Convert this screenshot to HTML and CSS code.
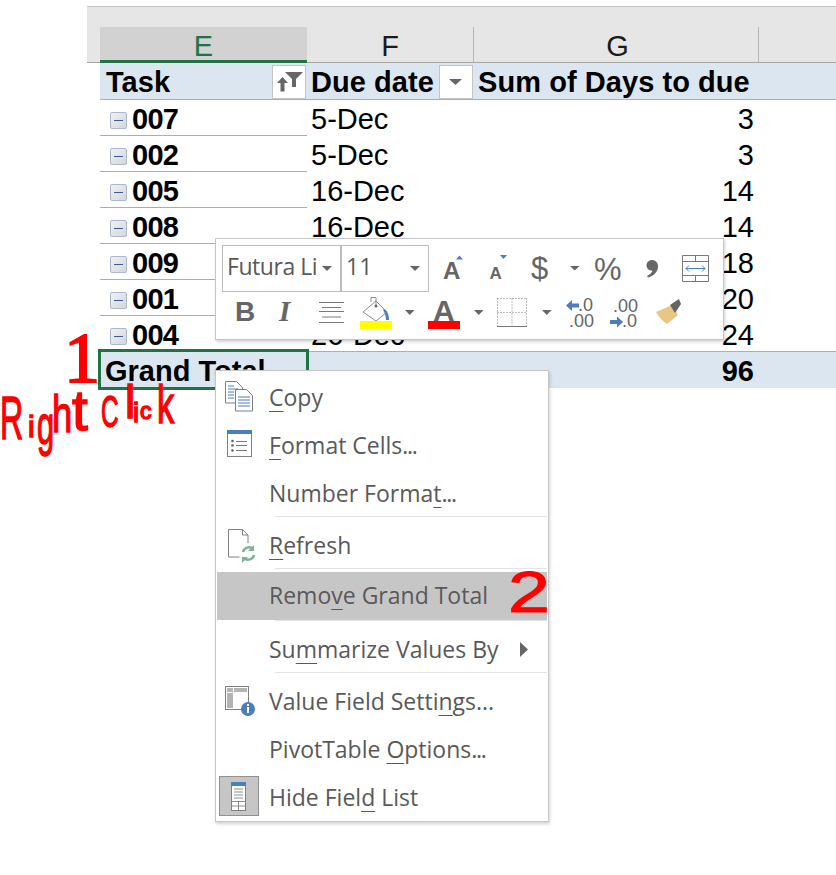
FILE: index.html
```html
<!DOCTYPE html>
<html lang="en">
<head>
<meta charset="utf-8">
<title>Remove Grand Total</title>
<link rel="stylesheet" href="styles.css">
</head>
<body>
<div class="page">
  <div class="colbar">
    <div class="colhead col-e selected">E</div>
    <div class="colhead head-f">F</div>
    <div class="colhead head-g">G</div>
  </div>
  <div class="row head">
    <div class="cell col-e bold pad-head">Task
      <span class="filter"><svg width="32" height="32" viewBox="0 0 32 32"><path class="ic" d="M12 6h18l-7 7v8h-4v-8z"/><path class="ic" d="M9.500 11l5.500 6h-3.500v8.500h-4V17H4z"/></svg></span>
    </div>
    <div class="cell col-f bold pad-f">Due date
      <span class="filter"><svg width="32" height="32" viewBox="0 0 32 32"><path class="ic" d="M9 13h13l-6.500 6z"/></svg></span>
    </div>
    <div class="cell col-g bold pad-g">Sum of Days to due</div>
  </div>
  <div class="row"><div class="cell col-e bold task"><span class="minus"></span>007</div><div class="cell col-f pad-f">5-Dec</div><div class="cell col-g num">3</div></div>
  <div class="row"><div class="cell col-e bold task"><span class="minus"></span>002</div><div class="cell col-f pad-f">5-Dec</div><div class="cell col-g num">3</div></div>
  <div class="row"><div class="cell col-e bold task"><span class="minus"></span>005</div><div class="cell col-f pad-f">16-Dec</div><div class="cell col-g num">14</div></div>
  <div class="row"><div class="cell col-e bold task"><span class="minus"></span>008</div><div class="cell col-f pad-f">16-Dec</div><div class="cell col-g num">14</div></div>
  <div class="row"><div class="cell col-e bold task"><span class="minus"></span>009</div><div class="cell col-f pad-f">18-Dec</div><div class="cell col-g num">18</div></div>
  <div class="row"><div class="cell col-e bold task"><span class="minus"></span>001</div><div class="cell col-f pad-f">20-Dec</div><div class="cell col-g num">20</div></div>
  <div class="row"><div class="cell col-e bold task"><span class="minus"></span>004</div><div class="cell col-f pad-f">26-Dec</div><div class="cell col-g num">24</div></div>
  <div class="row grand">
    <div class="cell col-e bold pad-grand picked">Grand Total</div>
    <div class="cell col-f"></div>
    <div class="cell col-g num bold">96</div>
  </div>
</div>

<div class="minibar">
  <div class="tools tools-top">
    <div class="combo combo-font"><span class="combo-text">Futura Light</span><svg class="combo-caret" width="10" height="5" viewBox="0 0 10 5"><path class="ic" d="M0 0h10L5 5z"/></svg></div>
    <div class="combo combo-size"><span class="combo-text">11</span><svg class="combo-caret" width="10" height="5" viewBox="0 0 10 5"><path class="ic" d="M0 0h10L5 5z"/></svg></div>
    <svg width="46" height="47" viewBox="0 0 46 47"><text class="glyph g-a-lg" x="13" y="34">A</text><path class="blue" d="M26 14.500l3.500-4 3.500 4z"/></svg>
    <svg width="40" height="47" viewBox="0 0 40 47"><text class="glyph g-a-sm" x="13.500" y="34">A</text><path class="blue" d="M24 10h7l-3.500 4z"/></svg>
    <svg width="50" height="47" viewBox="0 0 50 47"><text class="glyph g-dollar" x="15" y="34">$</text></svg>
    <svg width="20" height="47" viewBox="0 0 20 47"><path class="ic" d="M4 21h9.500l-4.750 4.500z"/></svg>
    <svg width="45" height="47" viewBox="0 0 45 47"><text class="glyph g-pct" x="8" y="35">%</text></svg>
    <svg width="40" height="47" viewBox="0 0 40 47"><path class="ic" d="M21 15c4 0 6 3 6 6.500 0 5-4 9.500-10 11l-1-1.500c3-1.500 5-3.500 5.500-5.500-3.500.5-6-2-6-5.200 0-3 2.500-5.300 5.500-5.300z"/></svg>
    <svg width="50" height="47" viewBox="0 0 50 47"><path class="line" d="M11.500 10.500h26v26h-26zM11.500 16.500h26M11.500 30.500h26M24.500 10.500v6M24.500 30.500v6"/><path class="blue-line" d="M15 23.500h19M18 20.500l-3 3 3 3M31 20.500l3 3-3 3"/></svg>
  </div>
  <div class="tools">
    <svg width="45" height="47" viewBox="0 0 45 47"><text class="glyph g-b" x="13" y="29">B</text></svg>
    <svg width="45" height="47" viewBox="0 0 45 47"><text class="glyph g-i" x="12" y="29">I</text></svg>
    <svg width="40" height="47" viewBox="0 0 40 47"><path class="line" d="M7 10.500h25M10 15.500h19M7 19.500h25M10 25h19M7 30.500h25"/></svg>
    <svg width="48" height="47" viewBox="0 0 48 47"><path class="line-thin" d="M11 20L24 9l11 11-11 9z"/><path class="line-thin" d="M19 10V5.500h5V13"/><circle class="ic" cx="24" cy="14" r="1.500"/><path class="blue" d="M32 17c3.500 2 5 6 5 11h-3c0-3-.5-6-3-10z"/><rect class="yellow" x="8" y="29" width="32" height="8"/></svg>
    <svg width="20" height="47" viewBox="0 0 20 47"><path class="ic" d="M5 18h9.500l-4.750 5z"/></svg>
    <svg width="48" height="47" viewBox="0 0 48 47"><text class="glyph g-a-red" x="13" y="29">A</text><rect class="red" x="8" y="29" width="32" height="8"/></svg>
    <svg width="20" height="47" viewBox="0 0 20 47"><path class="ic" d="M6 18h9.500l-4.750 5z"/></svg>
    <svg width="48" height="47" viewBox="0 0 48 47"><path class="dots" d="M9.500 6.500h29M9.500 20.500h29M24 6.500v28M9.500 6.500v28M38.500 6.500v28"/><path class="line" d="M9 34.500h30"/></svg>
    <svg width="20" height="47" viewBox="0 0 20 47"><path class="ic" d="M6 18h9.500l-4.750 5z"/></svg>
    <svg width="48" height="47" viewBox="0 0 48 47"><path class="blue" d="M10 13.500l6-5.500v3.500h7v4h-7V19z"/><text class="glyph g-dec" x="22" y="19">.0</text><text class="glyph g-dec" x="13" y="35">.00</text></svg>
    <svg width="46" height="47" viewBox="0 0 46 47"><text class="glyph g-dec" x="9" y="20">.00</text><path class="blue" d="M19 30l-6 5.500V32H6v-4h7v-3.500z"/><text class="glyph g-dec" x="18" y="35">.0</text></svg>
    <svg width="40" height="47" viewBox="0 0 40 47"><path class="tan" d="M6 20l16-7 6 10-11 9c-5-3-8-7-11-12z"/><path class="ic" d="M20 13l9-6 2 5-6 9z"/></svg>
  </div>
</div>

<div class="menu">
  <div class="item">
    <svg class="slot" width="53" height="48" viewBox="0 0 53 48"><path class="page-line" d="M9.500 7.500h11l6 6v15.500h-17z"/><path class="page-fill" d="M19.500 15.500h11l6 6v15.500h-17z"/><path class="blue-line" d="M12 12h6M12 15h10M12 18h6M12 21h6M12 24h6M22 23h12M22 26h12M22 29h12M22 32h12"/></svg>
    <span class="label"><u>C</u>opy</span>
  </div>
  <div class="item">
    <svg class="slot" width="53" height="48" viewBox="0 0 53 48"><rect class="page-line" x="11.500" y="8.500" width="24" height="26"/><rect class="blue" x="11" y="8" width="25" height="4"/><circle class="ic" cx="16.500" cy="19" r="1.300"/><circle class="ic" cx="16.500" cy="23.500" r="1.300"/><circle class="ic" cx="16.500" cy="28.500" r="1.300"/><path class="line" d="M20 19.500h11M20 23.500h11M20 28.500h11"/></svg>
    <span class="label"><u>F</u>ormat Cells<span class="ell">...</span></span>
  </div>
  <div class="item">
    <span class="slot"></span>
    <span class="label">Number Forma<u>t</u><span class="ell">...</span></span>
  </div>
  <div class="sep sep-tight"></div>
  <div class="item">
    <svg class="slot" width="53" height="48" viewBox="0 0 53 48"><path class="page-line" d="M12.500 7.500h14l5.500 5.500v8M26.500 7.500v5.500h5.500M12.500 7.500v27.500h11"/><path class="green-line" d="M27 30a6 6 0 0 1 10-3M38 33a6 6 0 0 1-10 3"/><path class="green" d="M38 23v6h-6zM26 41v-6h6z"/></svg>
    <span class="label"><u>R</u>efresh</span>
  </div>
  <div class="sep sep-hover"></div>
  <div class="item hover">
    <span class="slot"></span>
    <span class="label">Remo<u>v</u>e Grand Total</span>
  </div>
  <div class="sep sep-after"></div>
  <div class="item">
    <span class="slot"></span>
    <span class="label">Su<u>m</u>marize Values By</span>
    <svg class="more" width="8" height="15" viewBox="0 0 8 15"><path class="ic" d="M0 0l8 7.500L0 15z"/></svg>
  </div>
  <div class="sep sep-tight"></div>
  <div class="item">
    <svg class="slot" width="53" height="48" viewBox="0 0 53 48"><rect class="page-line" x="9.500" y="8.500" width="23" height="23"/><path class="block" d="M11 10h6v4h-6zM18 10h13v4H18zM11 15h6v15h-6z"/><circle class="blue" cx="32" cy="31" r="7"/><path class="white" d="M31 29h2v6h-2zM31 26h2v2h-2z"/></svg>
    <span class="label">Value Field Setti<u>n</u>gs...</span>
  </div>
  <div class="item">
    <span class="slot"></span>
    <span class="label">PivotTable <u>O</u>ptions<span class="ell">...</span></span>
  </div>
  <div class="item">
    <svg class="slot" width="53" height="48" viewBox="0 0 53 48"><rect class="toggle" x="3.500" y="2.500" width="39" height="39"/><rect class="page-fill" x="15.500" y="8.500" width="14" height="28"/><rect class="blue" x="15" y="8" width="15" height="4"/><path class="line-thin" d="M18 15h9M18 18h9M18 21h9M18 24h9M15.500 27.500h14M22.500 27.500v9M15.500 32h14"/></svg>
    <span class="label">Hide Fiel<u>d</u> List</span>
  </div>
</div>

<div class="ink" aria-label="Right Click">
  <span class="ink-l l-r">R</span><span class="ink-l l-i1">i</span><span class="ink-l l-g">g</span><span class="ink-l l-h">h</span><span class="ink-l l-t">t</span>
  <span class="ink-l l-c1">C</span><span class="ink-l l-l">l</span><span class="ink-l l-i2">i</span><span class="ink-l l-c2">c</span><span class="ink-l l-k">k</span>
  <span class="ink-n n-1">1</span>
  <span class="ink-n n-2">2</span>
</div>
</body>
</html>
```

FILE: styles.css
```css
html, body { margin: 0; padding: 0; background: #fff; }
body { position: relative; width: 836px; height: 875px; overflow: hidden; font-family: "Liberation Sans", Arial, sans-serif; }
.page { padding: 6px 0 0 87px; font-size: 29px; color: #000; }

.colbar { display: flex; padding: 20px 0 0 13px; box-sizing: border-box; height: 57px; background: #e6e6e6; border-top: 1px solid #c6c6c6; border-bottom: 1px solid #a6a6a6; }
.colhead { height: 35px; line-height: 38px; text-align: center; color: #1a1a1a; box-sizing: border-box; border-right: 1px solid #b8b8b8; }
.colhead.selected { background: #d2d2d2; color: #217346; border-right: 0; border-bottom: 3px solid #217346; height: 36px; }
.head-f { width: 167px; flex: none; }
.head-g { width: 285px; flex: none; padding-left: 3px; }

.col-e { width: 207px; flex: none; }
.col-f { width: 166px; flex: none; }
.col-g { width: 285px; flex: none; }

.row { display: flex; height: 36px; margin-left: 13px; line-height: 38px; }
.cell { box-sizing: border-box; white-space: nowrap; position: relative; }
.bold { font-weight: 700; }
.head { height: 37px; background: #dce6f1; border-bottom: 1px solid #95b3d7; box-sizing: border-box; letter-spacing: .06px; line-height: 38px; }
.pad-head { padding-left: 6px; }
.pad-grand { padding-left: 5px; }
.pad-f { padding-left: 4px; }
.pad-g { padding-left: 5px; }
.task { display: flex; align-items: center; padding: 2px 0 0 10px; border-bottom: 1px solid #95b3d7; letter-spacing: -.7px; line-height: 34px; }
.num { text-align: right; padding-right: 4px; }
.filter { position: absolute; right: 1px; top: 2px; width: 34px; height: 34px; box-sizing: border-box; background: #fff; border: 1px solid #c4c4c4; display: flex; }
.col-f .filter { right: 0; }
.minus { width: 17px; height: 17px; margin: 3px 5px 0 0; box-sizing: border-box; border: 1px solid #aeb8cb; border-radius: 2px; background: linear-gradient(135deg, #f0f1f4, #d3d6dc); position: relative; }
.minus::after { content: ""; position: absolute; left: 3px; right: 3px; top: 7px; height: 1px; background: #3f5a8e; }

.grand { height: 37px; margin-top: -1px; background: #dce6f1; border-top: 1px solid #95b3d7; box-sizing: border-box; line-height: 39px; }
.picked::after { content: ""; position: absolute; left: -2px; top: -3px; right: -2px; bottom: -2px; border: 3px solid #217346; }

.ic { fill: #666; }
.line { fill: none; stroke: #7a7a7a; stroke-width: 1; }
.line-thin { fill: none; stroke: #8c8c8c; stroke-width: 1; }
.dots { fill: none; stroke: #7a7a7a; stroke-width: 1; stroke-dasharray: 1 2; }
.blue { fill: #4a7fbb; }
.blue-line { fill: none; stroke: #4a7fbb; stroke-width: 1; }
.green { fill: #7fb09c; }
.green-line { fill: none; stroke: #7fb09c; stroke-width: 2.500; }
.yellow { fill: #ffff00; }
.red { fill: #ff0000; }
.tan { fill: #e8c684; }
.white { fill: #fff; }
.block { fill: #b4b4b4; }
.page-line { fill: #fff; stroke: #808080; stroke-width: 1; }
.page-fill { fill: #fff; stroke: #808080; stroke-width: 1; }
.toggle { fill: #c6c6c6; stroke: #919191; stroke-width: 1; }

.minibar { position: absolute; left: 215px; top: 238px; width: 509px; height: 102px; box-sizing: border-box; background: #fff; border: 1px solid #c6c6c6; box-shadow: 1px 2px 3px rgba(0,0,0,.18); padding: 6px 0 0 6px; z-index: 2; }
.tools { display: flex; height: 47px; }
.tools svg { flex: none; display: block; }
.combo { box-sizing: border-box; height: 47px; border: 1px solid #bdbdbd; display: flex; align-items: center; position: relative; font-family: "Open Sans", sans-serif; font-size: 23px; color: #595959; overflow: hidden; }
.combo-font { width: 119px; padding: 0 0 5px 4px; letter-spacing: -.45px; }
.combo-size { width: 88px; padding: 0 0 5px 4px; margin-right: 1px; }
.combo-text { white-space: nowrap; overflow: hidden; }
.combo-font .combo-text { width: 90px; }
.combo-caret { position: absolute; top: 20px; right: 8px; }

.glyph { fill: #666; font-family: "Liberation Sans", Arial, sans-serif; }
.g-a-lg { font-size: 24px; font-weight: 700; }
.g-a-sm { font-size: 17px; font-weight: 700; }
.g-dollar { font-size: 31px; }
.g-pct { font-size: 31px; }
.g-b { font-size: 28px; font-weight: 700; }
.g-i { font-family: "Liberation Serif", serif; font-size: 29px; font-weight: 700; font-style: italic; }
.g-a-red { font-size: 30px; font-weight: 700; }
.g-dec { font-size: 18px; }

.menu { position: absolute; left: 215px; top: 370px; width: 334px; height: 452px; box-sizing: border-box; background: #fff; border: 1px solid #c6c6c6; box-shadow: 1px 2px 3px rgba(0,0,0,.18); padding-top: 3px; z-index: 3; font-family: "Open Sans", sans-serif; font-size: 23px; color: #595959; }
.item { display: flex; align-items: center; height: 48px; margin-right: 1px; }
.slot { display: block; flex: none; width: 53px; height: 48px; }
.label { white-space: nowrap; padding-bottom: 2px; }
.label u { text-underline-offset: 5px; text-decoration-thickness: 1px; text-decoration-skip-ink: none; }
.ell { letter-spacing: -1.3px; }
.hover { background: #c6c6c6; margin-left: 1px; }
.hover .slot { width: 52px; }
.more { margin-left: auto; margin-right: 19px; margin-top: -2px; }
.sep { height: 1px; margin-left: 59px; margin-right: 1px; background: #e3e3e3; }
.sep-tight { margin-top: -2px; margin-bottom: 5px; }
.sep-hover { margin-top: -2px; margin-bottom: 3px; }
.sep-after { margin-bottom: 5px; }

.ink { position: absolute; left: 0; top: 0; z-index: 4; color: #f00; }
.ink-l { position: absolute; font-family: "Liberation Sans", sans-serif; line-height: 1; -webkit-text-stroke: 1.5px #f00; transform-origin: left center; }
.l-r { left: 0; top: 387px; font-size: 62px; transform: scaleX(.52); }
.l-i1 { left: 28px; top: 412px; font-size: 30px; }
.l-g { left: 37px; top: 397px; font-size: 56px; transform: scaleX(.55); }
.l-h { left: 52px; top: 388px; font-size: 52px; transform: scaleX(.7); }
.l-t { left: 72px; top: 382px; font-size: 57px; }
.l-c1 { left: 101px; top: 390px; font-size: 44px; transform: scaleX(.55); }
.l-l { left: 125px; top: 379px; font-size: 46px; }
.l-i2 { left: 133px; top: 400px; font-size: 27px; }
.l-c2 { left: 140px; top: 400px; font-size: 23px; }
.l-k { left: 157px; top: 378px; font-size: 53px; transform: scaleX(.65); }
.ink-n { position: absolute; line-height: 1; -webkit-text-stroke: 1px #f00; transform-origin: left center; }
.n-1 { left: 64px; top: 322px; font-size: 72px; font-family: "Liberation Serif", serif; -webkit-text-stroke-width: 2px; }
.n-2 { left: 508px; top: 563px; font-size: 58px; font-family: "Liberation Sans", sans-serif; transform: scaleX(1.3); }
```
